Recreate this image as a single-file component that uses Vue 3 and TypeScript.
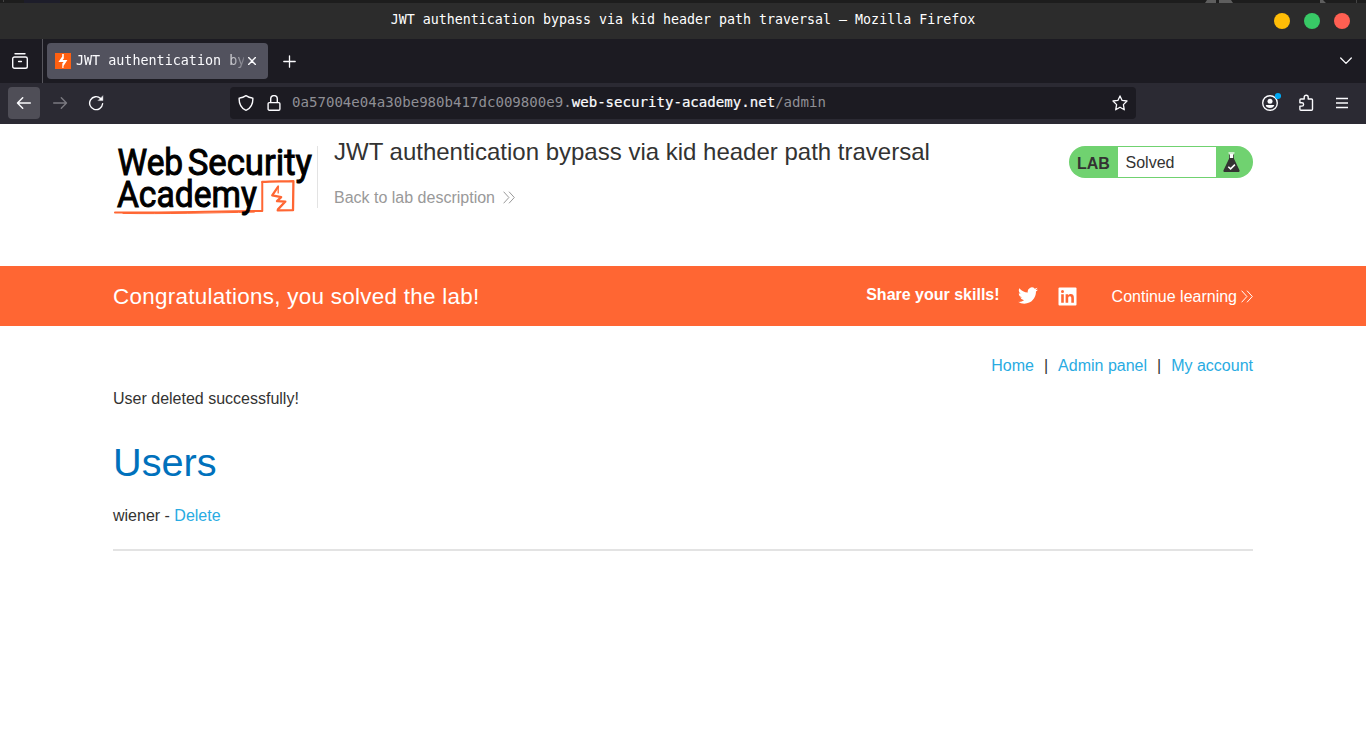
<script setup lang="ts">
interface NavLink {
  label: string
}

const windowTitle = 'JWT authentication bypass via kid header path traversal – Mozilla Firefox'
const labTitle = 'JWT authentication bypass via kid header path traversal'
const host = { sub: '0a57004e04a30be980b417dc009800e9.', domain: 'web-security-academy.net', path: '/admin' }
const windowButtons: string[] = ['yellow', 'green', 'red']
const links: NavLink[] = [{ label: 'Home' }, { label: 'Admin panel' }, { label: 'My account' }]
</script>

<template>
  <div class="window">
    <div class="desktop-edge">
      <svg width="1366" height="3" viewBox="0 0 1366 3">
        <path d="M24 0h36v3H24z" fill="#1d1d2a" />
        <path d="M3 0h1v2H3zM1356 0h1v3h-1z" fill="#444" />
        <path d="M1207 0h9v3h-11zM1219 0h12l2 3h-14zM1320 0h3l3 3h-6z" fill="#5e5e5e" />
      </svg>
    </div>
    <header class="titlebar">
      <span class="title-text">{{ windowTitle }}</span>
      <div class="buttons">
        <span v-for="b in windowButtons" :key="b" class="dot" :class="b"></span>
      </div>
    </header>

    <div class="tabbar">
      <div class="view-cell">
        <svg width="16" height="16" viewBox="0 0 16 16" fill="none" stroke="#fbfbfe" stroke-width="1.4" stroke-linecap="round">
          <path d="M3 .8h10" />
          <path d="M2.500 4h11c1 0 1.800.7 1.800 1.700v7.800c0 1-.8 1.800-1.800 1.800h-11c-1 0-1.800-.8-1.800-1.800V5.700c0-1 .8-1.700 1.800-1.700z" />
          <path d="M6.600 8.600h2.800" stroke-width="1.500" />
        </svg>
      </div>
      <div class="tab">
        <svg class="favicon" width="16" height="16" viewBox="0 0 16 16">
          <path d="M0 0h16v16H0z" fill="#ff6011" />
          <path d="M8.800 1v4.600L7.600 7h4.800L8.500 13v2H7.300v-4.600L8.700 8.900H3.400L7.200 3.500V1z" fill="#fff" />
        </svg>
        <span class="tab-title">JWT authentication by</span>
        <svg class="close" width="8" height="8" viewBox="0 0 8 8" stroke="#fbfbfe" stroke-width="1.400" stroke-linecap="round">
          <path d="M.6.6l6.800 6.800M7.400.6L.6 7.400" />
        </svg>
      </div>
      <svg class="plus" width="13" height="13" viewBox="0 0 13 13" stroke="#fbfbfe" stroke-width="1.300" stroke-linecap="round">
        <path d="M6.500.8v11.400M.8 6.500h11.400" />
      </svg>
      <svg class="all-tabs" width="12" height="8" viewBox="0 0 12 8" fill="none" stroke="#fbfbfe" stroke-width="1.300" stroke-linecap="round" stroke-linejoin="round">
        <path d="M.7 1l5.300 5.400L11.300 1" />
      </svg>
    </div>

    <div class="toolbar">
      <div class="nav-button active">
        <svg width="16" height="14" viewBox="0 0 16 14" fill="none" stroke="#fbfbfe" stroke-width="1.500" stroke-linecap="round" stroke-linejoin="round">
          <path d="M14.300 7H1.700M6.700 1.800L1.500 7l5.200 5.200" />
        </svg>
      </div>
      <div class="nav-button">
        <svg width="16" height="14" viewBox="0 0 16 14" fill="none" stroke="#7b7a81" stroke-width="1.400" stroke-linecap="round" stroke-linejoin="round">
          <path d="M1.700 7h12.600M9.300 1.800L14.500 7l-5.200 5.200" />
        </svg>
      </div>
      <div class="nav-button">
        <svg width="16" height="16" viewBox="0 0 16 16" fill="none" stroke="#fbfbfe" stroke-width="1.400" stroke-linecap="round">
          <path d="M12.600 3.400A6.500 6.500 0 1 0 14.600 8.800" />
          <path d="M14.900 1v4.600h-4.600z" fill="#fbfbfe" stroke-width=".4" stroke-linejoin="round" />
        </svg>
      </div>
      <div class="urlbar">
        <svg class="shield" width="16" height="16" viewBox="0 0 16 16" fill="none" stroke="#fbfbfe" stroke-width="1.400" stroke-linejoin="round">
          <path d="M8 .7c2 1.300 4.200 2.100 6.300 2.300.4 0 .6.3.6.7 0 5-2.300 9.400-6.500 11.500-.3.100-.5.100-.8 0C3.400 13.100 1.100 8.700 1.100 3.700c0-.4.2-.7.6-.7C3.800 2.800 6 2 8 .7z" />
        </svg>
        <svg class="lock" width="14" height="16" viewBox="0 0 14 16" fill="none" stroke="#fbfbfe" stroke-width="1.400">
          <path d="M2.300 7.600h9.400c.7 0 1.200.5 1.200 1.200V14c0 .7-.5 1.200-1.200 1.200H2.300c-.7 0-1.200-.5-1.200-1.200V8.800c0-.7.500-1.200 1.200-1.200zM3.700 7.400V3.900a3.300 3.300 0 0 1 6.600 0v3.500" />
        </svg>
        <span class="url">{{ host.sub }}<b>{{ host.domain }}</b>{{ host.path }}</span>
        <svg class="star" width="16" height="16" viewBox="0 0 16 16" fill="none" stroke="#fbfbfe" stroke-width="1.300" stroke-linejoin="round">
          <path d="M8 .9l2.100 4.500 4.900.6-3.600 3.600.9 5.200L8 12.200l-4.300 2.600.9-5.200L1 6l4.900-.6z" />
        </svg>
      </div>
      <div class="tools">
        <svg width="20" height="20" viewBox="0 0 20 20">
          <circle cx="9" cy="11" r="7.300" fill="none" stroke="#fbfbfe" stroke-width="1.400" />
          <circle cx="9" cy="9.300" r="2.500" fill="#fbfbfe" />
          <path d="M4.700 13h8.600c-.4 1.800-2.100 3-4.300 3s-3.900-1.200-4.300-3z" fill="#fbfbfe" />
          <circle cx="17" cy="4" r="3.100" fill="#00a8f3" />
        </svg>
        <svg class="puzzle" width="15" height="17" viewBox="0 0 15 17" fill="none" stroke="#fbfbfe" stroke-width="1.400" stroke-linejoin="round">
          <path d="M1.900 5h3.300V3.200a2 2 0 0 1 4 0V5h3.300c.6 0 1 .4 1 1v9.200c0 .6-.4 1-1 1H1.900c-.6 0-1-.4-1-1v-3.100h2a1.700 1.700 0 0 0 0-3.400h-2V6c0-.6.4-1 1-1z" />
        </svg>
        <svg width="12" height="12" viewBox="0 0 12 12" stroke="#fbfbfe" stroke-width="1.300">
          <path d="M0 1.500h12M0 6h12M0 10.500h12" />
        </svg>
      </div>
    </div>

    <main class="page">
      <section class="lab-header">
        <svg class="logo" width="205" height="80" viewBox="0 0 205 80">
          <g fill="none" stroke="#ff6633" stroke-linecap="round" stroke-linejoin="round">
            <path d="M2 74.600C45 75.500 100 73.500 150 73.200V44.400" stroke-width="2" />
            <path d="M150 44C160 43.200 172 43.600 181.300 43.100L180.900 72.300 165.500 72.600" stroke-width="2.300" />
            <path d="M10 75.600C50 76.300 100 75 142 74.300" stroke-width="1" />
            <path d="M165.800 49L160 57.400 169 59.200 164.800 63.200 173.200 63.700 165.800 71.500" stroke-width="2.300" />
            <path d="M166 48V55" stroke-width="1.300" />
          </g>
          <g class="logo-text">
            <text x="4.500" y="37" textLength="66" lengthAdjust="spacingAndGlyphs">Web</text>
            <text x="75" y="37" textLength="125" lengthAdjust="spacingAndGlyphs">Security</text>
            <text x="4" y="69" textLength="140.500" lengthAdjust="spacingAndGlyphs">Academy</text>
          </g>
        </svg>
        <div class="lab-info">
          <h2>{{ labTitle }}</h2>
          <a class="back">Back to lab description
            <svg width="12" height="13" viewBox="0 0 12 13" fill="none" stroke="#999" stroke-width="1">
              <path d="M.6.700l5.300 5.800L.600 12.300M6 .700l5.300 5.800L6 12.300" />
            </svg>
          </a>
        </div>
        <div class="status">
          <strong>LAB</strong>
          <span class="solved">Solved</span>
          <svg width="17" height="21" viewBox="0 0 17 21">
            <path d="M6.300 1.500h4.400v5H6.300z" fill="#fff" />
            <path d="M5.500 .9h6" stroke="#fff" stroke-width="1.100" />
            <path d="M6 2.500v4.300L.500 18.200C.100 19.300.700 20 1.700 20h13.600c1 0 1.600-.7 1.200-1.800L11 6.800V2.500h-.8V6H6.800V2.500z" fill="#333332" />
            <path d="M5.300 14.700l2.300 2.200 4.300-4.300" fill="none" stroke="#fff" stroke-width="1.500" />
          </svg>
        </div>
      </section>

      <section class="banner">
        <h4>Congratulations, you solved the lab!</h4>
        <span class="share">Share your skills!</span>
        <svg class="twitter" width="20" height="18" viewBox="0 2.500 24 20" fill="#fff">
          <path d="M23.950 4.570a10 10 0 0 1-2.820.77 4.960 4.960 0 0 0 2.160-2.720c-.95.550-2 .95-3.130 1.180a4.920 4.920 0 0 0-8.380 4.480C7.690 8.090 4.070 6.130 1.640 3.160a4.820 4.820 0 0 0-.67 2.480c0 1.710.87 3.210 2.190 4.100a4.900 4.900 0 0 1-2.230-.62v.06a4.920 4.920 0 0 0 3.950 4.830 5 5 0 0 1-2.210.08 4.940 4.940 0 0 0 4.600 3.420A9.870 9.870 0 0 1 0 19.540a13.990 13.990 0 0 0 7.550 2.210c9.050 0 14-7.500 14-13.980 0-.21 0-.42-.02-.63a9.940 9.940 0 0 0 2.420-2.570z" />
        </svg>
        <svg class="linkedin" width="19" height="19" viewBox="0 0 19 19">
          <rect x=".5" y=".5" width="18" height="18" rx="1" fill="#fff" />
          <path d="M3.200 7.200h2.600v8.500H3.200zM7.600 7.200h2.500v1.200c.5-.8 1.400-1.400 2.600-1.400 2.400 0 3.200 1.500 3.200 3.900v4.800h-2.600v-4.400c0-1.300-.3-2.100-1.400-2.100-1.200 0-1.700.9-1.700 2.100v4.400H7.600z" fill="#ff6633" />
          <circle cx="4.500" cy="4.500" r="1.500" fill="#ff6633" />
        </svg>
        <a class="continue"><span>Continue learning</span>
          <svg width="12" height="13" viewBox="0 0 12 13" fill="none" stroke="#fff" stroke-width="1">
            <path d="M.600.700l5.300 5.800L.600 12.300M6 .700l5.300 5.800L6 12.300" />
          </svg>
        </a>
      </section>

      <section class="content">
        <nav class="links">
          <template v-for="(link, i) in links" :key="link.label">
            <span v-if="i > 0" class="sep">|</span>
            <a>{{ link.label }}</a>
          </template>
        </nav>
        <p class="message">User deleted successfully!</p>
        <h1>Users</h1>
        <p class="user">wiener - <a>Delete</a></p>
        <hr />
      </section>
    </main>
  </div>
</template>

<style>
body {
  margin: 0;
  background: #fff;
}
</style>

<style scoped>
.window {
  width: 1366px;
  height: 741px;
  overflow: hidden;
  background: #fff;
  font: 16px/20px "Liberation Sans", Arial, sans-serif;
  color: #333332;
}
svg {
  display: block;
  flex: none;
}
.desktop-edge {
  height: 3px;
  background: #1d1d1d;
}
.titlebar {
  height: 36px;
  box-sizing: border-box;
  background: #2c2c2c;
  display: grid;
  grid-template-columns: 1fr auto 1fr;
  align-items: center;
}
.title-text {
  grid-column: 2;
  font: 13.3px/16px "DejaVu Sans Mono", monospace;
  color: #fff;
  white-space: pre;
  padding-bottom: 3px;
}
.buttons {
  display: flex;
  justify-content: flex-end;
  gap: 14px;
  padding-right: 16px;
}
.dot {
  width: 16px;
  height: 16px;
  border-radius: 50%;
}
.yellow { background: #ffbd07; }
.green { background: #38c966; }
.red { background: #ff5f52; }

.tabbar {
  height: 44px;
  background: #1c1b22;
  display: flex;
  align-items: center;
}
.view-cell {
  width: 30px;
  height: 44px;
  border-right: 1px solid #57565d;
  display: flex;
  align-items: center;
  padding-left: 12px;
}
.tab {
  width: 221px;
  height: 36px;
  margin-left: 4px;
  border-radius: 4px;
  background: #52525e;
  box-sizing: border-box;
  padding: 0 11px 0 8px;
  display: flex;
  align-items: center;
}
.tab-title {
  width: 168px;
  margin-left: 5px;
  margin-right: 4px;
  padding-bottom: 1px;
  overflow: hidden;
  white-space: pre;
  font: 13.4px/18px "DejaVu Sans Mono", monospace;
  color: #fbfbfe;
  -webkit-mask-image: linear-gradient(to right, #000 148px, transparent 174px);
  mask-image: linear-gradient(to right, #000 148px, transparent 174px);
}
.plus {
  margin-left: 15px;
}
.all-tabs {
  margin-left: auto;
  margin-right: 14px;
}

.toolbar {
  height: 41px;
  box-sizing: border-box;
  background: #2b2a33;
  display: flex;
  align-items: center;
  padding: 0 0 1px 8px;
}
.nav-button {
  width: 32px;
  height: 32px;
  border-radius: 4px;
  margin-right: 4px;
  display: flex;
  align-items: center;
  justify-content: center;
}
.active {
  background: #4f4e57;
}
.urlbar {
  width: 906px;
  height: 32px;
  box-sizing: border-box;
  margin-left: 114px;
  border-radius: 4px;
  background: #1c1b22;
  display: flex;
  align-items: center;
  padding: 0 8px;
}
.lock {
  margin-left: 13px;
}
.url {
  font: 14.08px/20px "DejaVu Sans Mono", monospace;
  color: #8f8f95;
  margin-left: 11px;
  padding-bottom: 2px;
  white-space: pre;
}
.url b {
  color: #fbfbfe;
  font-weight: 400;
  -webkit-text-stroke: .2px #fbfbfe;
}
.star {
  margin-left: auto;
}
.tools {
  margin-left: auto;
  padding-right: 18px;
  display: flex;
  align-items: center;
}
.tools svg:first-child {
  margin-bottom: 3px;
}
.puzzle {
  margin: 0 22px 1px 18px;
}

.lab-header {
  height: 142px;
  width: 1140px;
  margin: 0 auto;
  display: flex;
  align-items: flex-start;
}
.logo {
  width: 204px;
  margin-top: 14px;
  height: 80px;
  overflow: visible;
}
.logo-text {
  font-family: Roboto, sans-serif;
  font-weight: 400;
  font-size: 37.5px;
  fill: #000;
  stroke: #000;
  stroke-width: 1px;
}
.lab-info {
  height: 62px;
  margin-top: 22px;
  border-left: 1px solid #e3e3e3;
  padding-left: 16px;
  box-sizing: border-box;
}
.lab-info h2 {
  margin: -8px 0 0;
  font-size: 24px;
  font-weight: 400;
  line-height: 28px;
  white-space: nowrap;
}
.back {
  display: flex;
  align-items: center;
  gap: 8px;
  margin-top: 22px;
  color: #999;
}
.back svg {
  margin-bottom: 2px;
}
.status {
  margin: 22px 0 0 auto;
  width: 184px;
  height: 32px;
  box-sizing: border-box;
  border-radius: 16px;
  background: #70d270;
  display: flex;
  align-items: center;
}
.status strong {
  width: 49px;
  box-sizing: border-box;
  padding-left: 8px;
  padding-top: 3px;
}
.solved {
  width: 98px;
  height: 30px;
  line-height: 32px;
  box-sizing: border-box;
  padding-left: 7.5px;
  background: #fff;
  margin-right: 7px;
}

.banner {
  height: 60px;
  background: #ff6633;
  color: #fff;
  padding: 0 113px;
  display: flex;
  align-items: center;
}
.banner h4 {
  margin: 0 auto 0 0;
  font-weight: 400;
  font-size: 22.4px;
  line-height: 28px;
  letter-spacing: .29px;
  padding-top: 2px;
}
.share {
  font-weight: 700;
  padding-bottom: 2px;
}
.twitter {
  margin-left: 18.5px;
}
.linkedin {
  margin-left: 19.5px;
}
.continue {
  display: flex;
  align-items: center;
  gap: 4px;
  margin-left: 35px;
}
.continue span {
  padding-top: 2px;
}

.content {
  width: 1140px;
  margin: 0 auto;
  padding-top: 29px;
}
.links {
  display: flex;
  justify-content: flex-end;
  line-height: 22px;
}
.links a,
.user a {
  color: #29abe2;
}
.sep {
  margin: 0 10px;
}
.message {
  margin: 11px 0 0;
  line-height: 22px;
}
h1 {
  margin: 27px 0 0;
  font-size: 39.7px;
  line-height: 50px;
  font-weight: 400;
  color: #0071bc;
}
.user {
  margin: 18px 0 0;
  line-height: 22px;
}
hr {
  margin: 22px 0 0;
  border: 0;
  height: 2px;
  background: #e3e3e3;
}
</style>
